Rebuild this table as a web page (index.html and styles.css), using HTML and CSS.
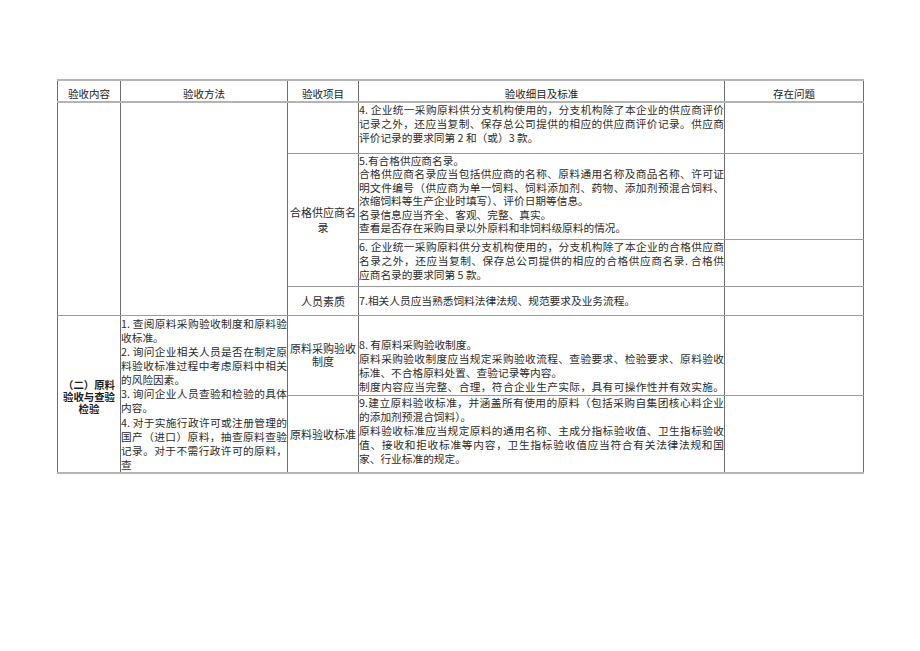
FILE: index.html
```html
<!DOCTYPE html>
<html lang="zh-CN">
<head>
<meta charset="utf-8">
<title>验收表</title>
<link rel="stylesheet" href="styles.css">
</head>
<body>
<table class="sheet">
  <colgroup>
    <col class="c1"><col class="c2"><col class="c3"><col class="c4"><col class="c5">
  </colgroup>
  <tr class="rh">
    <th>验收内容</th><th>验收方法</th><th>验收项目</th><th>验收细目及标准</th><th>存在问题</th>
  </tr>
  <tr class="r1">
    <td rowspan="4"></td>
    <td rowspan="4"></td>
    <td></td>
    <td class="d p3">
      <div class="f">4. 企业统一采购原料供分支机构使用的，分支机构除了本企业的供应商评价</div>
      <div class="f">记录之外，还应当复制、保存总公司提供的相应的供应商评价记录。供应商</div>
      <div>评价记录的要求同第 2 和（或）3 款。</div>
    </td>
    <td></td>
  </tr>
  <tr class="r5">
    <td rowspan="2" class="lab lab15">合格供应商名录</td>
    <td class="d p5 tight">
      <div>5.有合格供应商名录。</div>
      <div class="f">合格供应商名录应当包括供应商的名称、原料通用名称及商品名称、许可证</div>
      <div class="f">明文件编号（供应商为单一饲料、饲料添加剂、药物、添加剂预混合饲料、</div>
      <div>浓缩饲料等生产企业时填写）、评价日期等信息。</div>
      <div>名录信息应当齐全、客观、完整、真实。</div>
      <div>查看是否存在采购目录以外原料和非饲料级原料的情况。</div>
    </td>
    <td></td>
  </tr>
  <tr class="r6">
    <td class="d p6">
      <div class="f">6. 企业统一采购原料供分支机构使用的，分支机构除了本企业的合格供应商</div>
      <div class="f">名录之外，还应当复制、保存总公司提供的相应的合格供应商名录. 合格供</div>
      <div>应商名录的要求同第 5 款。</div>
    </td>
    <td></td>
  </tr>
  <tr class="r7">
    <td class="lab">人员素质</td>
    <td class="d mid">
      <div>7.相关人员应当熟悉饲料法律法规、规范要求及业务流程。</div>
    </td>
    <td></td>
  </tr>
  <tr class="r8">
    <td rowspan="2" class="sec">（二）原料<br>验收与查验<br>检验</td>
    <td rowspan="2" class="m">
      <div class="f">1. 查阅原料采购验收制度和原料验</div>
      <div>收标准。</div>
      <div class="f">2. 询问企业相关人员是否在制定原</div>
      <div class="f">料验收标准过程中考虑原料中相关</div>
      <div>的风险因素。</div>
      <div class="f">3. 询问企业人员查验和检验的具体</div>
      <div>内容。</div>
      <div class="f">4. 对于实施行政许可或注册管理的</div>
      <div class="f">国产（进口）原料，抽查原料查验</div>
      <div class="f">记录。对于不需行政许可的原料，</div>
      <div>查</div>
    </td>
    <td class="lab lab13">原料采购验收制度</td>
    <td class="d bot">
      <div>8. 有原料采购验收制度。</div>
      <div class="f">原料采购验收制度应当规定采购验收流程、查验要求、检验要求、原料验收</div>
      <div>标准、不合格原料处置、查验记录等内容。</div>
      <div class="f">制度内容应当完整、合理，符合企业生产实际，具有可操作性并有效实施。</div>
    </td>
    <td></td>
  </tr>
  <tr class="r9">
    <td class="lab">原料验收标准</td>
    <td class="d p9">
      <div class="f">9.建立原料验收标准，并涵盖所有使用的原料（包括采购自集团核心料企业</div>
      <div>的添加剂预混合饲料）。</div>
      <div class="f">原料验收标准应当规定原料的通用名称、主成分指标验收值、卫生指标验收</div>
      <div class="f">值、接收和拒收标准等内容，卫生指标验收值应当符合有关法律法规和国</div>
      <div>家、行业标准的规定。</div>
    </td>
    <td></td>
  </tr>
</table>
</body>
</html>
```
FILE: styles.css
```css
html, body {
  margin: 0;
  padding: 0;
  background: #ffffff;
}
body {
  font-family: "Noto Sans CJK SC", "Liberation Sans", sans-serif;
  color: #2b2b2b;
  font-size: 10.7px;
}
.sheet {
  margin: 79px 0 0 57px;
  width: 806px;
  table-layout: fixed;
  border-collapse: collapse;
  border-top: 2px solid #b4b4b4;
  border-bottom: 2px solid #b4b4b4;
}
.c1 { width: 63px; }
.c2 { width: 167px; }
.c3 { width: 71px; }
.c4 { width: 366px; }
.c5 { width: 139px; }

.sheet th,
.sheet td {
  border-left: 1px solid #6e6e6e;
  border-right: 1px solid #6e6e6e;
  border-top: 1px solid #9a9a9a;
  border-bottom: 1px solid #9a9a9a;
  padding: 0;
  vertical-align: top;
  overflow: hidden;
}
.sheet th {
  font-weight: 400;
  font-size: 10.5px;
  line-height: 14px;
  padding-top: 6px;
  color: #222;
  text-align: center;
  border-bottom: 2px solid #b4b4b4;
}
.rh { height: 22px; }
.r1 { height: 51px; }
.r5 { height: 86px; }
.r6 { height: 47px; }
.r7 { height: 29px; }
.r8 { height: 80px; }
.r9 { height: 78px; }

.d {
  line-height: 14px;
}
.d.tight { line-height: 13.6px; }
.p3 { padding-top: 3px; }
.p5 { padding-top: 3px; }
.p6 { padding-top: 5px; }
.p9 { padding-top: 6px; }
.sheet td.mid { vertical-align: middle; }
.sheet td.bot { vertical-align: bottom; padding-bottom: 1px; }

.f {
  text-align: justify;
  text-align-last: justify;
  white-space: nowrap;
}

.sheet td.lab {
  vertical-align: middle;
  text-align: center;
  font-size: 11px;
  line-height: 14px;
}
.sheet td.lab15 { line-height: 15px; }
.sheet td.lab13 { line-height: 13px; }

.sheet td.sec {
  vertical-align: middle;
  text-align: center;
  font-weight: 700;
  font-size: 10.4px;
  line-height: 12px;
  padding-top: 6px;
  color: #1e1e1e;
}

.sheet td.m {
  line-height: 14.15px;
  padding-top: 1px;
}
```
